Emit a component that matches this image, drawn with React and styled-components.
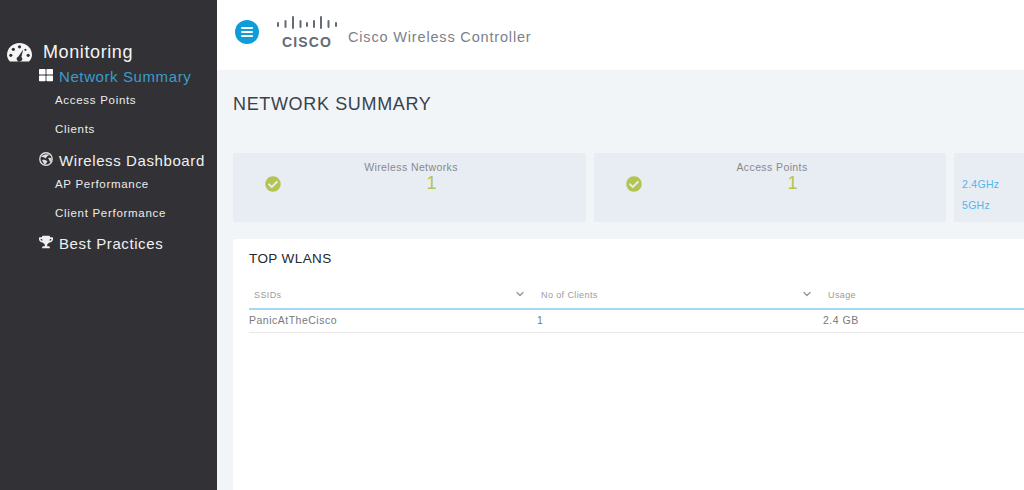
import React from 'react';
import styled, { createGlobalStyle } from 'styled-components';
import { FaThLarge, FaTrophy, FaCheckCircle } from 'react-icons/fa';
import { ChevronDown } from 'lucide-react';

const GlobalStyle = createGlobalStyle`
  html, body {
    margin: 0;
    height: 100%;
    overflow: hidden;
    background: #f1f5f8;
    font-family: "Liberation Sans", Arial, sans-serif;
  }
`;

const Page = styled.div`
  display: flex;
  width: 1024px;
  height: 490px;
  overflow: hidden;
`;

const Sidebar = styled.nav`
  flex: 0 0 217px;
  box-sizing: border-box;
  padding: 41px 0 0 7px;
  background: #323136;
  color: #fff;
`;

const TopItem = styled.div`
  display: flex;
  align-items: center;
  gap: 11px;
  height: 22px;
  font-size: 18px;
  letter-spacing: 0.6px;
  color: #f4f4f4;
`;

const Group = styled.div`
  padding-left: 32px;
  margin-top: ${(p) => p.$top}px;
`;

const GroupTitle = styled.div`
  display: flex;
  align-items: center;
  gap: 6px;
  height: 20px;
  font-size: 15px;
  letter-spacing: 0.6px;
  color: ${(p) => (p.$active ? '#3b9dca' : '#f0f0f0')};

  svg {
    flex: none;
    margin-top: -3px;
  }
`;

const SubItem = styled.div`
  height: 29px;
  padding-left: 16px;
  font-size: 11.5px;
  line-height: 29px;
  letter-spacing: 0.7px;
  color: #ececec;
`;

const Main = styled.main`
  flex: 1;
  min-width: 0;
`;

const Header = styled.header`
  display: flex;
  align-items: center;
  height: 70px;
  box-sizing: border-box;
  padding: 0 0 6px 18px;
  background: #fff;
`;

const MenuButton = styled.div`
  display: flex;
  flex-direction: column;
  justify-content: center;
  align-items: center;
  gap: 2px;
  width: 24px;
  height: 24px;
  margin-right: 18px;
  border-radius: 50%;
  background: #0d9dd9;
`;

const MenuLine = styled.span`
  width: 12px;
  height: 2px;
  border-radius: 1px;
  background: #fff;
`;

const Logo = styled.div`
  display: flex;
  flex-direction: column;
  align-items: center;
  width: 60px;
  margin-right: 11px;
  color: #646b75;
`;

const LogoWord = styled.span`
  margin-top: 4px;
  font-size: 14px;
  line-height: 13px;
  font-weight: 700;
  letter-spacing: 1.1px;
`;

const ProductName = styled.span`
  margin-top: 10px;
  font-size: 14.5px;
  letter-spacing: 0.83px;
  color: #7b818a;
`;

const Content = styled.div`
  padding: 0 0 0 16px;
`;

const PageTitle = styled.h1`
  margin: 0;
  height: 83px;
  padding-top: 24px;
  box-sizing: border-box;
  font-size: 18px;
  line-height: 21px;
  font-weight: 400;
  letter-spacing: 0.65px;
  color: #39424c;
`;

const Cards = styled.div`
  display: grid;
  grid-template-columns: 353px 352px 200px;
  gap: 8px;
  height: 69px;
`;

const Card = styled.div`
  display: flex;
  box-sizing: border-box;
  border-radius: 2px;
  background: #e8edf3;
`;

const CheckSlot = styled.div`
  flex: 0 0 79px;
  padding: 23px 0 0 32px;
  box-sizing: border-box;
  color: #b4c452;
`;

const CardBody = styled.div`
  width: 198px;
  padding-top: 8px;
  text-align: center;
`;

const CardLabel = styled.div`
  font-size: 10.5px;
  line-height: 12px;
  letter-spacing: 0.4px;
  color: #87898f;
`;

const CardValue = styled.div`
  padding-left: 41px;
  font-size: 18px;
  line-height: 20px;
  color: #b4c452;
`;

const BandList = styled.div`
  display: flex;
  flex-direction: column;
  gap: 9px;
  padding: 25px 0 0 8px;
`;

const Band = styled.div`
  font-size: 10.5px;
  line-height: 12px;
  letter-spacing: 0.3px;
  color: #4fb8e8;
`;

const Panel = styled.section`
  width: 900px;
  height: 260px;
  box-sizing: border-box;
  margin-top: 17px;
  padding: 12px 0 0 16px;
  border-radius: 3px 0 0 0;
  background: #fff;
`;

const PanelTitle = styled.h2`
  margin: 0;
  font-size: 13.5px;
  line-height: 16px;
  font-weight: 400;
  letter-spacing: 0.4px;
  color: #23282e;
`;

const Row = styled.div`
  display: grid;
  grid-template-columns: 287px 287px 1fr;
  align-items: center;
`;

const HeadRow = styled(Row)`
  height: 27px;
  margin-top: 14px;
  border-bottom: 2px solid #a3daf3;
`;

const BodyRow = styled(Row)`
  height: 20px;
  padding-bottom: 2px;
  border-bottom: 1px solid #e8e8e8;
`;

const HeadCell = styled.div`
  display: flex;
  align-items: center;
  justify-content: space-between;
  box-sizing: border-box;
  padding: 0 10px 0 5px;
  font-size: 9px;
  letter-spacing: 0.4px;
  color: #9a9ca0;

  svg {
    margin-top: -2px;
    color: #8f9296;
  }
`;

const BodyCell = styled.div`
  font-size: 10.5px;
  letter-spacing: 0.5px;
  color: #76797e;
  padding-left: ${(p) => p.$indent || 0}px;
`;

const GaugeIcon = () => (
  <svg width="25" height="19" viewBox="0 0 25 19">
    <path d="M3 18.5 C1 16.5 0 14 0 12 C0 5 5.5 0 12.5 0 C19.5 0 25 5 25 12 C25 14 24 16.5 22 18.5 Z" fill="#f6f6f6" />
    <g fill="#323136">
      <circle cx="12.5" cy="3.8" r="1.6" />
      <circle cx="6.3" cy="6.3" r="1.6" />
      <circle cx="3.8" cy="12.3" r="1.6" />
      <circle cx="21.2" cy="12.3" r="1.6" />
      <circle cx="18.4" cy="6.8" r="1.1" />
      <path d="M16.2 6.6 L14.4 14 A2.7 2.7 0 1 1 11.4 13.4 Z" />
    </g>
  </svg>
);

const GlobeIcon = () => (
  <svg width="14" height="14" viewBox="0 0 14 14">
    <circle cx="7" cy="7" r="6.2" fill="#2d2c31" stroke="#dedede" strokeWidth="1.4" />
    <path d="M2 5 C4 2 8 1.5 11 3 C8.5 3.4 7.5 4.6 7 6.4 C5.2 5.2 3.6 5 2 5 Z" fill="#dedede" />
    <path d="M3 8 C5 7.2 7 7.8 8.4 9.2 C8 10.8 7 12 5.4 12.4 C4.6 11 3.6 9.6 3 8 Z" fill="#dedede" />
    <path d="M9 6 C10.4 5.4 11.8 5.6 12.6 6.4 C12.6 8 12 9.2 11 10.4 C10.6 8.6 10 7.2 9 6 Z" fill="#dedede" />
  </svg>
);

const CiscoBars = () => (
  <svg width="60" height="16" viewBox="0 0 60 16" fill="currentColor">
    {[
      [0, 6, 5], [7.5, 4, 8], [15, 0, 13], [22.5, 4, 8], [29, 6, 5], [36, 4, 8], [43, 0, 13], [50.5, 4, 8], [58, 6, 5],
    ].map(([x, y, h]) => (
      <rect key={`${x}-${y}`} x={x} y={y} width="2" height={h} rx="1" />
    ))}
  </svg>
);

const StatCard = ({ label, value }) => (
  <Card>
    <CheckSlot><FaCheckCircle size={16} /></CheckSlot>
    <CardBody>
      <CardLabel>{label}</CardLabel>
      <CardValue>{value}</CardValue>
    </CardBody>
  </Card>
);

const HeadColumn = ({ children }) => (
  <HeadCell>
    <span>{children}</span>
    <ChevronDown size={12} strokeWidth={2.4} />
  </HeadCell>
);

const App = () => (
  <Page>
    <GlobalStyle />
    <Sidebar>
      <TopItem>
        <GaugeIcon />
        <span>Monitoring</span>
      </TopItem>
      <Group $top={3}>
        <GroupTitle $active>
          <FaThLarge size={14} color="#fff" />
          <span>Network Summary</span>
        </GroupTitle>
        <SubItem>Access Points</SubItem>
        <SubItem>Clients</SubItem>
      </Group>
      <Group $top={6}>
        <GroupTitle>
          <GlobeIcon />
          <span>Wireless Dashboard</span>
        </GroupTitle>
        <SubItem>AP Performance</SubItem>
        <SubItem>Client Performance</SubItem>
      </Group>
      <Group $top={5}>
        <GroupTitle>
          <FaTrophy size={14} />
          <span>Best Practices</span>
        </GroupTitle>
      </Group>
    </Sidebar>
    <Main>
      <Header>
        <MenuButton>
          <MenuLine />
          <MenuLine />
          <MenuLine />
        </MenuButton>
        <Logo>
          <CiscoBars />
          <LogoWord>CISCO</LogoWord>
        </Logo>
        <ProductName>Cisco Wireless Controller</ProductName>
      </Header>
      <Content>
        <PageTitle>NETWORK SUMMARY</PageTitle>
        <Cards>
          <StatCard label="Wireless Networks" value="1" />
          <StatCard label="Access Points" value="1" />
          <Card>
            <BandList>
              <Band>2.4GHz</Band>
              <Band>5GHz</Band>
            </BandList>
          </Card>
        </Cards>
        <Panel>
          <PanelTitle>TOP WLANS</PanelTitle>
          <HeadRow>
            <HeadColumn>SSIDs</HeadColumn>
            <HeadColumn>No of Clients</HeadColumn>
            <HeadCell><span>Usage</span></HeadCell>
          </HeadRow>
          <BodyRow>
            <BodyCell>PanicAtTheCisco</BodyCell>
            <BodyCell $indent={1}>1</BodyCell>
            <BodyCell>2.4 GB</BodyCell>
          </BodyRow>
        </Panel>
      </Content>
    </Main>
  </Page>
);

export default App;
